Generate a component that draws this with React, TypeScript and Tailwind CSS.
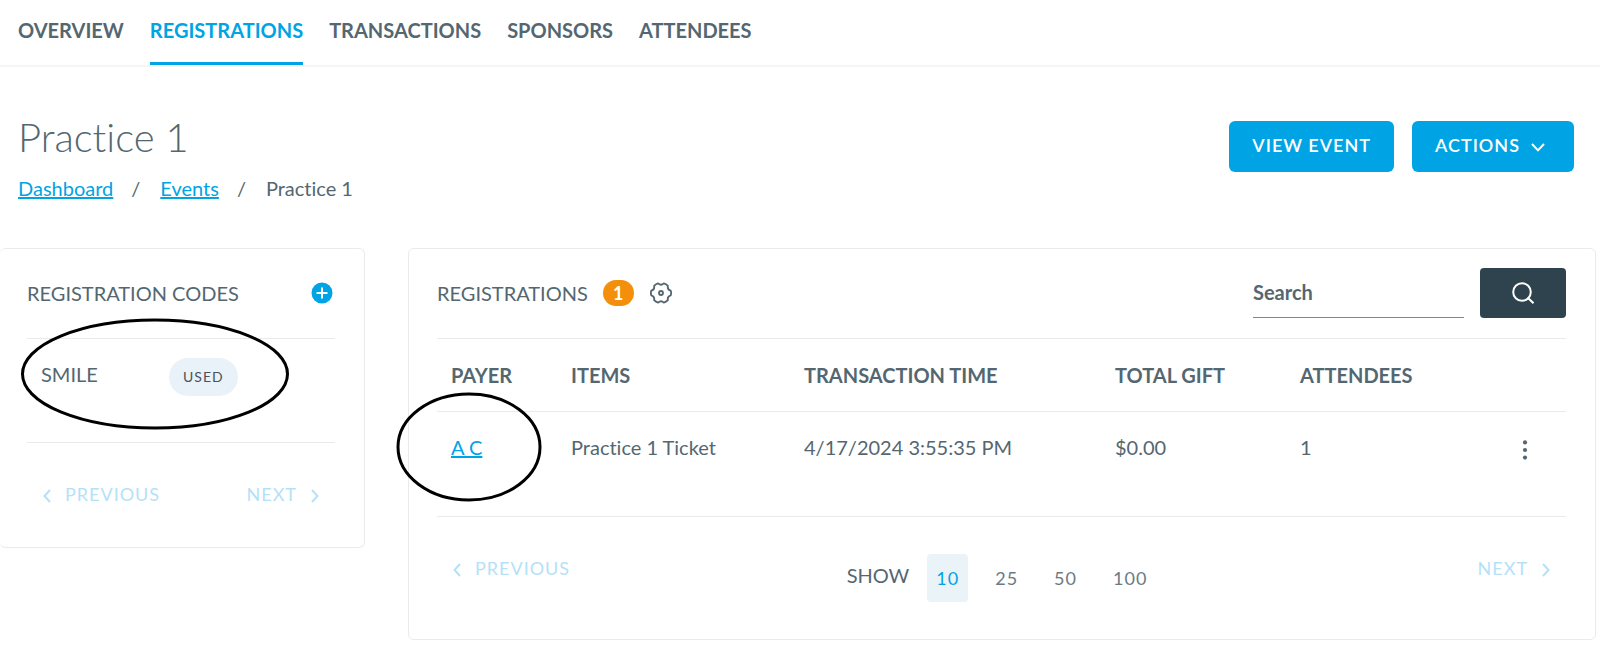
import { useState } from "react"

const NAV_ITEMS = ["OVERVIEW", "REGISTRATIONS", "TRANSACTIONS", "SPONSORS", "ATTENDEES"]
const PAGE_SIZES = [10, 25, 50, 100]

const REGISTRATIONS = [
  { payer: "A C", items: "Practice 1 Ticket", time: "4/17/2024 3:55:35 PM", total: "$0.00", attendees: 1 },
]

const ChevronIcon = ({ className }: { className?: string }) => (
  <svg viewBox="0 0 8 14" className={className} fill="none" stroke="currentColor" strokeWidth="2">
    <path d="M7 1 1.5 7 7 13" />
  </svg>
)

const GearIcon = () => (
  <svg viewBox="0 0 22 22" className="h-[22px] w-[22px]" fill="none" stroke="currentColor" strokeWidth="1.8" strokeLinejoin="round">
    <path d="M20.7 8.6Q21.5 11 20.7 13.4Q17.1 14.5 17.9 18.2Q16.2 20 13.8 20.6Q11 18 8.2 20.6Q5.8 20 4.1 18.2Q4.9 14.5 1.3 13.4Q.5 11 1.3 8.6Q4.9 7.5 4.1 3.8Q5.8 2 8.2 1.4Q11 4 13.8 1.4Q16.2 2 17.9 3.8Q17.1 7.5 20.7 8.6Z" />
    <circle cx="11" cy="11" r="2" />
  </svg>
)

const PreviousButton = () => (
  <button disabled className="flex h-6 items-center gap-[14px] text-lg leading-6 tracking-[1px] text-[#b5e1f8]">
    <ChevronIcon className="mt-1 h-[14px] w-2" />
    PREVIOUS
  </button>
)

const NextButton = () => (
  <button disabled className="flex h-6 items-center gap-[14px] text-lg leading-6 tracking-[1px] text-[#b5e1f8]">
    NEXT
    <ChevronIcon className="mt-1 h-[14px] w-2 rotate-180" />
  </button>
)

export default function App() {
  const [pageSize, setPageSize] = useState(10)
  const [search, setSearch] = useState("")

  return (
    <div className="bg-white font-['Lato',sans-serif] text-xl leading-6 text-[#546771] [font-variant-ligatures:none]">
      {/* Top navigation */}
      <nav className="flex gap-[26px] border-b-2 border-[#f4f5f5] px-[18px] font-bold">
        {NAV_ITEMS.map((item) => (
          <a
            key={item}
            href="#"
            className={
              item === "REGISTRATIONS"
                ? "border-b-3 border-[#00a4e4] pt-[18px] pb-5 text-[#00a4e4]"
                : "border-b-3 border-transparent pt-[18px] pb-5"
            }
          >
            {item}
          </a>
        ))}
      </nav>

      {/* Page header */}
      <header className="flex items-start justify-between pt-[52px] pr-[26px] pl-[18px]">
        <div>
          <h1 className="text-[40px] leading-[36px] font-light">Practice 1</h1>
          <div className="mt-[21px] flex">
            <a href="#" className="text-[#00a4e4] underline">Dashboard</a>
            <span className="pr-5 pl-[18px]">/</span>
            <a href="#" className="text-[#00a4e4] underline">Events</a>
            <span className="pr-5 pl-[18px]">/</span>
            <span>Practice 1</span>
          </div>
        </div>
        <div className="flex gap-[18px] pt-[2px] text-lg font-semibold tracking-[1px] text-white">
          <button className="h-[51px] rounded-md bg-[#00a4e4] px-[23px] pb-[3px]">VIEW EVENT</button>
          <button className="flex h-[51px] items-center gap-[11px] rounded-md bg-[#00a4e4] pr-[29px] pb-[3px] pl-[23px]">
            ACTIONS
            <svg viewBox="0 0 14 9" className="mt-1 h-[9px] w-[14px]" fill="none" stroke="currentColor" strokeWidth="2">
              <path d="M1 1 7 7.4 13 1" />
            </svg>
          </button>
        </div>
      </header>

      <div className="flex items-start gap-[43px] pt-[48px] pr-1">
        {/* Registration codes */}
        <section className="w-[365px] shrink-0 rounded-md border border-l-0 border-[#e9eaeb] pr-[29px] pl-[27px]">
          <div className="flex h-[90px] items-center justify-between border-b border-[#e9eaeb] pr-[2px] pb-[2px]">
            <h2>REGISTRATION CODES</h2>
            <button aria-label="Add registration code">
              <svg viewBox="0 0 22 22" className="h-[22px] w-[22px]">
                <circle cx="11" cy="11" r="10.5" fill="#00a4e4" />
                <path d="M11 5.5v11M5.5 11h11" stroke="#fff" strokeWidth="2" />
              </svg>
            </button>
          </div>
          <div className="relative flex h-[104px] items-start border-b border-[#e9eaeb] px-[14px]">
            <span className="w-[128px] pt-[23px]">SMILE</span>
            <span className="mt-[19px] rounded-full bg-[#e9f1f9] px-[14px] py-[7px] text-sm leading-6 tracking-[1px] text-[#4b5258]">USED</span>
            {/* Highlight */}
            <svg viewBox="0 0 270 112" className="pointer-events-none absolute -top-[21px] -left-[7px] h-[112px] w-[270px]">
              <ellipse cx="135" cy="56" rx="132.5" ry="54" fill="none" stroke="#000" strokeWidth="3" />
            </svg>
          </div>
          <div className="flex justify-between px-4 pt-[39px] pb-[41px]">
            <PreviousButton />
            <NextButton />
          </div>
        </section>

        {/* Registrations */}
        <section className="min-w-0 flex-1 rounded-md border border-[#e9eaeb] pr-[29px] pl-7">
          <div className="flex h-[90px] items-center border-b border-[#e9eaeb] pb-[2px]">
            <h2>REGISTRATIONS</h2>
            <span className="ml-[15px] flex h-[26px] w-[31px] items-center justify-center rounded-full bg-[#f48f0b] text-lg font-bold text-white">1</span>
            <button aria-label="Settings" className="ml-4">
              <GearIcon />
            </button>
            <form className="ml-auto flex items-center gap-4" onSubmit={(e) => e.preventDefault()}>
              <input
                aria-label="Search"
                placeholder="Search"
                value={search}
                onChange={(e) => setSearch(e.target.value)}
                className="h-[50px] w-[211px] border-b border-[#7a8891] font-bold outline-none placeholder:text-[#546771]"
              />
              <button aria-label="Submit search" className="flex h-[50px] w-[86px] items-center justify-center rounded bg-[#2f434e] text-white">
                <svg viewBox="0 0 22 22" className="h-[22px] w-[22px]" fill="none" stroke="currentColor" strokeWidth="2">
                  <circle cx="10" cy="10" r="8.8" />
                  <path d="m15.5 15.5 6 5.7" />
                </svg>
              </button>
            </form>
          </div>

          <table className="w-full table-fixed text-left">
            <thead>
              <tr className="h-[72px] border-b border-[#e9eaeb]">
                <th className="w-[120px] pl-[14px]">PAYER</th>
                <th className="w-[233px] pl-[14px]">ITEMS</th>
                <th className="w-[311px] pl-[14px]">TRANSACTION TIME</th>
                <th className="w-[185px] pl-[14px]">TOTAL GIFT</th>
                <th className="pl-[14px]">ATTENDEES</th>
                <th className="w-[62px]"></th>
              </tr>
            </thead>
            <tbody>
              {REGISTRATIONS.map((row) => (
                <tr key={row.payer} className="h-[105px] border-b border-[#e9eaeb] align-top">
                  <td className="relative pt-[23px] pl-[14px]">
                    <a href="#" className="text-[#00a4e4] underline">{row.payer}</a>
                    {/* Highlight */}
                    <svg viewBox="0 0 146 110" className="pointer-events-none absolute -top-5 -left-[41px] h-[110px] w-[146px]">
                      <ellipse cx="73" cy="55" rx="71" ry="53" fill="none" stroke="#000" strokeWidth="3" />
                    </svg>
                  </td>
                  <td className="pt-[23px] pl-[14px]">{row.items}</td>
                  <td className="pt-[23px] pl-[14px]">{row.time}</td>
                  <td className="pt-[23px] pl-[14px]">{row.total}</td>
                  <td className="pt-[23px] pl-[14px]">{row.attendees}</td>
                  <td className="pt-7 pl-[18px]">
                    <button aria-label="More actions" className="block">
                      <svg viewBox="0 0 6 20" className="h-5 w-[6px]" fill="currentColor">
                        <circle cx="3" cy="2.4" r="2.1" />
                        <circle cx="3" cy="10" r="2.1" />
                        <circle cx="3" cy="17.6" r="2.1" />
                      </svg>
                    </button>
                  </td>
                </tr>
              ))}
            </tbody>
          </table>

          <div className="flex px-4 py-[37px]">
            <div className="flex flex-1 pt-[2px]">
              <PreviousButton />
            </div>
            <div className="flex items-center gap-[18px]">
              <span className="pb-[5px]">SHOW</span>
              {PAGE_SIZES.map((size) => (
                <button
                  key={size}
                  onClick={() => setPageSize(size)}
                  className={
                    size === pageSize
                      ? "h-12 rounded bg-[#eaf4f8] px-[9px] text-lg tracking-[1px] text-[#00a4e4]"
                      : "h-12 rounded px-[9px] text-lg tracking-[1px] text-[#6b7b84]"
                  }
                >
                  {size}
                </button>
              ))}
            </div>
            <div className="flex flex-1 justify-end pt-[2px]">
              <NextButton />
            </div>
          </div>
        </section>
      </div>
    </div>
  )
}
